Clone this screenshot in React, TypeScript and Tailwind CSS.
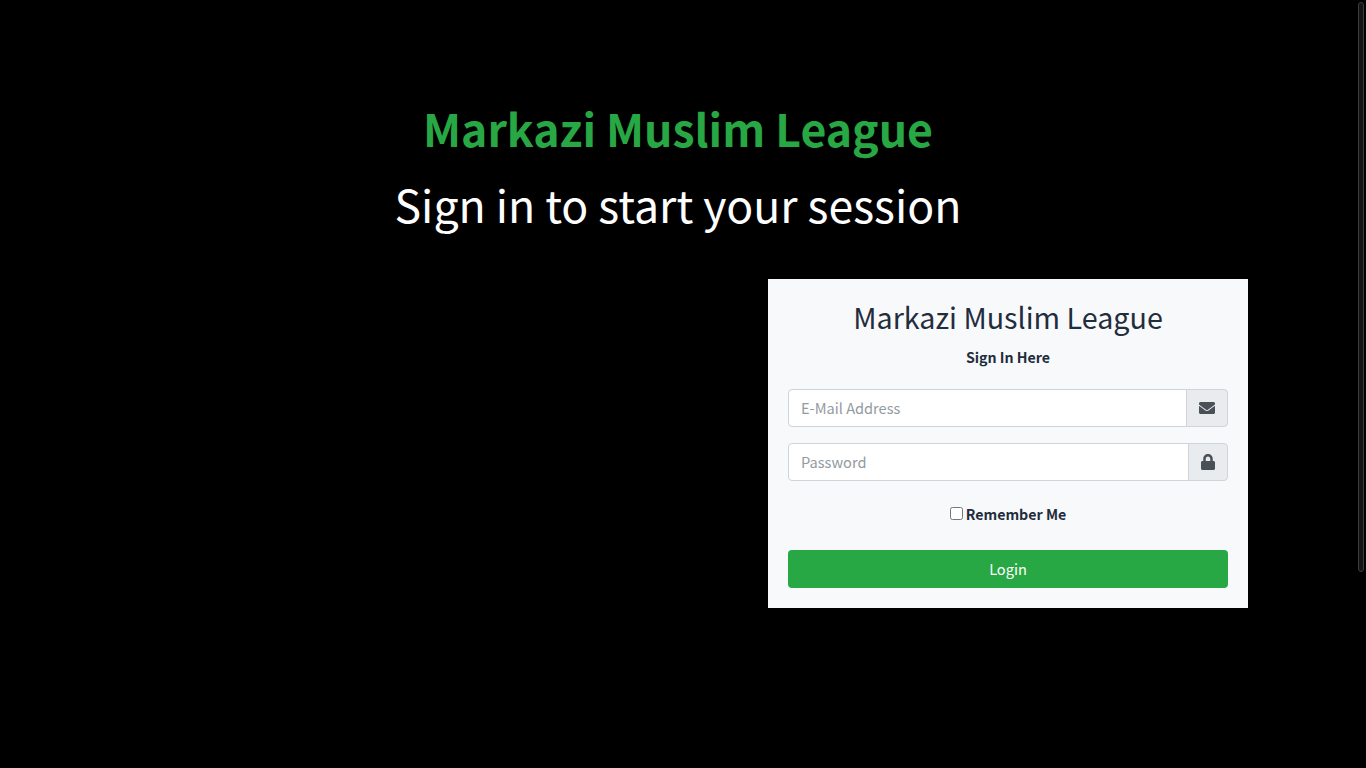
import { FaEnvelope, FaLock } from "react-icons/fa";

const font = "font-['Noto_Sans_CJK_JP','Noto_Sans',sans-serif]";

function Field({ placeholder, type, icon }: { placeholder: string; type: string; icon: React.ReactNode }) {
  return (
    <div className="flex h-[38px] items-stretch">
      <input
        type={type}
        placeholder={placeholder}
        className="min-w-0 flex-1 rounded-l-[4px] border border-[#ced4da] bg-white px-3 text-[14.6px] text-[#495057] outline-none placeholder:text-[#939ba2]"
      />
      <div className="-ml-px flex items-center justify-center rounded-r-[4px] border border-[#ced4da] bg-[#e9ecef] px-3 text-[#495057]">
        {icon}
      </div>
    </div>
  );
}

export default function App() {
  return (
    <div className={`flex h-[768px] overflow-hidden bg-black ${font}`}>
      <main className="flex w-[1356px] flex-col items-center">
        <div className="mt-[99px] text-center">
          <h1 className="text-[44.6px] leading-[58px] font-bold text-[#28a745]">Markazi Muslim League</h1>
          <h2 className="mt-[18px] text-[44.6px] leading-[58px] font-normal text-white">Sign in to start your session</h2>
        </div>
        <div className="mt-[46px] flex w-[1140px] justify-end">
          <div className="w-[480px] bg-[#f8f9fa] p-5 text-[#1f2d3d]">
            <h3 className="-mt-px text-center text-[28.7px] leading-[38px] font-normal">Markazi Muslim League</h3>
            <p className="mt-[9px] mb-[20px] text-center text-[14.2px] leading-6 font-bold">Sign In Here</p>
            <div className="flex flex-col gap-4">
              <Field placeholder="E-Mail Address" type="email" icon={<FaEnvelope className="h-4 w-4" />} />
              <Field placeholder="Password" type="password" icon={<FaLock className="h-4 w-[14px]" />} />
            </div>
            <div className="mt-[21px] flex items-center justify-center gap-[3px]">
              <input type="checkbox" className="mb-[2px] h-[13px] w-[13px]" />
              <label className="text-[14.2px] leading-6 font-bold">Remember Me</label>
            </div>
            <button className="mt-[24px] block h-[38px] w-full rounded-[4px] bg-[#28a745] text-[14.6px] text-white">Login</button>
          </div>
        </div>
      </main>
      <div className="w-[10px] px-[2px] pt-[2px]">
        <div className="h-[570px] w-[6px] rounded-[3px] border border-[#3c3c3c] bg-[#141414]" />
      </div>
    </div>
  );
}
